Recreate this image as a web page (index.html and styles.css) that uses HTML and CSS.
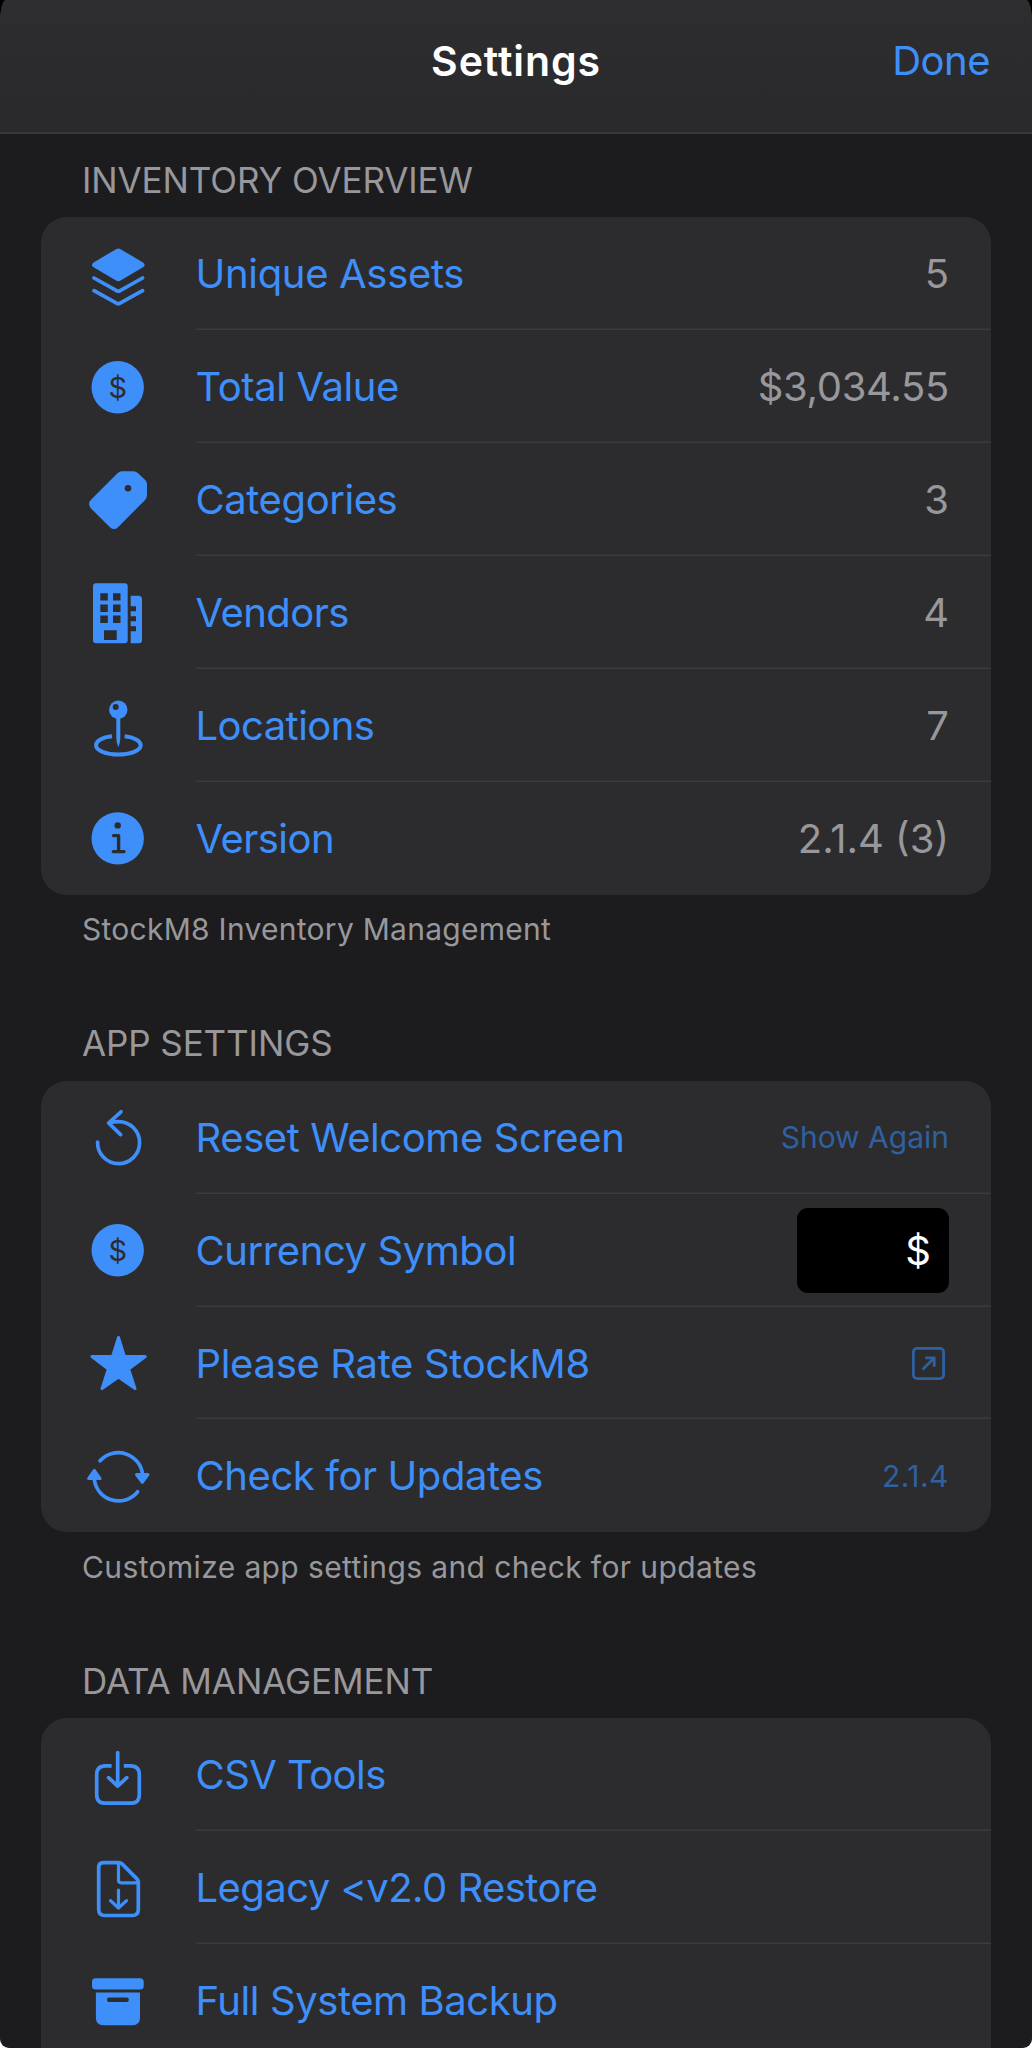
FILE: index.html
```html
<!DOCTYPE html>
<html lang="en">
<head>
    <meta charset="UTF-8">
    <meta name="viewport" content="width=device-width, initial-scale=1.0">
    <title>Settings</title>
    <link rel="stylesheet" href="styles.css">
</head>
<body>
    <div class="sheet">
        <header class="navbar">
            <h1>Settings</h1>
            <a class="done" href="#">Done</a>
        </header>

        <main>
            <section>
                <h2>Inventory Overview</h2>
                <div class="card">
                    <div class="row">
                        <svg class="icon" viewBox="0 0 64 72">
                            <path class="fill" d="M30 11.2Q32.3 9.8 34.6 11.2L57 24.5Q60.4 26.9 57 29.2L34.6 42.5Q32.3 43.9 30 42.5L7.6 29.2Q4.2 26.9 7.6 24.5Z"/>
                            <path class="line" d="M8 40L30.5 52.6Q32.3 53.7 34.1 52.6L56.6 40M8 52.6L30.5 65.2Q32.3 66.3 34.1 65.2L56.6 52.6"/>
                        </svg>
                        <div class="content"><span class="label loose">Unique Assets</span><span class="value">5</span></div>
                    </div>
                    <div class="row">
                        <svg class="icon" viewBox="0 0 64 72">
                            <circle class="fill" cx="31.7" cy="36.2" r="26.2"/>
                            <text class="symbol" x="31.7" y="46.7">$</text>
                        </svg>
                        <div class="content"><span class="label">Total Value</span><span class="value money">$3,034.55</span></div>
                    </div>
                    <div class="row">
                        <svg class="icon" viewBox="0 0 64 72">
                            <path class="fill" d="M31.5 9.3Q33.5 7.3 36 7.3H47.5Q50 7.3 51.8 9L59.2 16Q61 17.8 61 20V31Q61 34 58.8 36.2L32 63.2Q28 67 24 63.2L5 44.4Q1 40 5 35.8Z"/>
                            <circle class="hole" cx="42" cy="24.3" r="3.3"/>
                        </svg>
                        <div class="content"><span class="label">Categories</span><span class="value">3</span></div>
                    </div>
                    <div class="row">
                        <svg class="icon" viewBox="0 0 64 72">
                            <rect class="fill" x="7" y="6.3" width="34.7" height="60" rx="3"/>
                            <path class="fill" d="M44.7 18.7H52.5Q56 18.7 56 22.2V63.3Q56 66.3 53 66.3H44.7Z"/>
                            <path class="hole" d="M14.3 16.3h7.5v7.3h-7.5zM27 16.3h7.5v7.3H27zM14.3 27.6h7.5v7.3h-7.5zM27 27.6h7.5v7.3H27zM14.3 38.6h7.5v7.3h-7.5zM27 38.6h7.5v7.3H27zM18 53.3h12.7v9.7H18zM44 29.3h6v5h-6zM44 39.3h6v5h-6zM44 49.3h6v5h-6z"/>
                        </svg>
                        <div class="content"><span class="label tight">Vendors</span><span class="value">4</span></div>
                    </div>
                    <div class="row">
                        <svg class="icon" viewBox="0 0 64 72">
                            <path class="line ring" d="M26 46.3C16.5 47.3 10 50.8 10 55.3C10 60.5 20 64.5 32.3 64.5S54.7 60.5 54.7 55.3C54.7 50.8 48 47.3 38.7 46.3"/>
                            <circle class="fill" cx="32.3" cy="19.7" r="9.2"/>
                            <path class="fill" d="M30.3 27H34.3V48Q34 54 32.3 57.3Q30.6 54 30.3 48Z"/>
                            <circle class="hole" cx="29.7" cy="17" r="3"/>
                        </svg>
                        <div class="content"><span class="label tight">Locations</span><span class="value">7</span></div>
                    </div>
                    <div class="row">
                        <svg class="icon" viewBox="0 0 64 72">
                            <circle class="fill" cx="31.7" cy="36.4" r="26.2"/>
                            <circle class="hole" cx="31.7" cy="23.4" r="3.2"/>
                            <path class="cut" d="M27.5 33.6H32.6V49.6M27.3 49.6H38"/>
                        </svg>
                        <div class="content"><span class="label tight">Version</span><span class="value">2.1.4 (3)</span></div>
                    </div>
                </div>
                <p class="footnote">StockM8 Inventory Management</p>
            </section>

            <section>
                <h2>App Settings</h2>
                <div class="card">
                    <div class="row">
                        <svg class="icon" viewBox="0 0 64 72">
                            <path class="line" d="M11.6 41.2A21 21 0 1 0 32.6 20.6Q27.5 20.6 23 22M35 10.8L22.6 22L34.6 33.6"/>
                        </svg>
                        <div class="content"><span class="label">Reset Welcome Screen</span><span class="value action">Show Again</span></div>
                    </div>
                    <div class="row">
                        <svg class="icon" viewBox="0 0 64 72">
                            <circle class="fill" cx="31.7" cy="36.2" r="26.2"/>
                            <text class="symbol" x="31.7" y="46.7">$</text>
                        </svg>
                        <div class="content"><span class="label">Currency Symbol</span><span class="field">$</span></div>
                    </div>
                    <div class="row">
                        <svg class="icon" viewBox="0 0 64 72">
                            <path class="fill star" d="M32.5 10.5L38.4 29.5H59.3L42.6 42L49 61.6L32.5 50L16 61.6L22.4 42L5.9 29.5H26.6Z"/>
                        </svg>
                        <div class="content">
                            <span class="label loose">Please Rate StockM8</span>
                            <svg class="external" viewBox="0 0 33 33">
                                <rect x="1.4" y="1.4" width="30.2" height="30.2" rx="3.5"/>
                                <path d="M10.6 22.4L21.8 11.2M13.2 10.8H22.2V19.8"/>
                            </svg>
                        </div>
                    </div>
                    <div class="row">
                        <svg class="icon" viewBox="0 0 64 72">
                            <path class="line" d="M14.1 20.8A24.4 24.4 0 0 1 56.6 35M8.2 38A24.4 24.4 0 0 0 51.6 51.8"/>
                            <path class="fill tip" d="M50.5 34.6H62L56.3 42.3ZM2.6 38.6H14.1L8.3 30.4Z"/>
                        </svg>
                        <div class="content"><span class="label">Check for Updates</span><span class="value action number">2.1.4</span></div>
                    </div>
                </div>
                <p class="footnote wide">Customize app settings and check for updates</p>
            </section>

            <section>
                <h2>Data Management</h2>
                <div class="card open">
                    <div class="row">
                        <svg class="icon" viewBox="0 0 64 72">
                            <path class="line butt" d="M25.6 26.9H19.5Q10.7 26.9 10.7 35.7V55.4Q10.7 64.2 19.5 64.2H44.5Q53.3 64.2 53.3 55.4V35.7Q53.3 26.9 44.5 26.9H37.8"/>
                            <path class="line" d="M31.7 13.6V47M22.6 38.6L31.7 47.2L40.8 38.6"/>
                        </svg>
                        <div class="content"><span class="label tight">CSV Tools</span></div>
                    </div>
                    <div class="row">
                        <svg class="icon" viewBox="0 0 64 72">
                            <path class="line" d="M17.5 10.6H32.5Q34.8 10.6 36.3 12.1L50.7 26.6Q52.3 28.2 52.3 30.6V57.5Q52.3 63.5 46.3 63.5H18.7Q12.7 63.5 12.7 57.5V15.6Q12.7 10.6 17.5 10.6Z"/>
                            <path class="line thin" d="M32.5 11.5V28Q32.5 30.8 35.3 30.8H51M32.5 38V56M24.5 48.6L32.5 56L40.5 48.6"/>
                        </svg>
                        <div class="content"><span class="label tight">Legacy &lt;v2.0 Restore</span></div>
                    </div>
                    <div class="row">
                        <svg class="icon" viewBox="0 0 64 72">
                            <rect class="fill" x="6" y="13.3" width="51.7" height="11.3" rx="3.5"/>
                            <path class="fill" d="M9.9 27.6H54V52.8Q54 60.3 46.5 60.3H17.4Q9.9 60.3 9.9 52.8Z"/>
                            <rect class="hole" x="21" y="32.5" width="21.8" height="4.6" rx="2"/>
                        </svg>
                        <div class="content"><span class="label">Full System Backup</span></div>
                    </div>
                </div>
            </section>
        </main>
    </div>
</body>
</html>
```
FILE: styles.css
```css
:root {
    --blue: #3f8ffb;
    --blue-dim: #2f609f;
    --gray: #98989c;
    --sheet: #1c1c1e;
    --card: #2c2c2e;
    --separator: #3b3b3d;
}

* {
    margin: 0;
    padding: 0;
    box-sizing: border-box;
}

body {
    height: 2048px;
    overflow: hidden;
    background: linear-gradient(#000 50%, #fff 50%);
    font-family: Inter, sans-serif;
    font-size: 40px;
    color: var(--blue);
}

.sheet {
    height: 2048px;
    overflow: hidden;
    border-radius: 6px 6px 9px 9px / 22px 22px 9px 9px;
    background: var(--sheet);
}

.navbar {
    display: grid;
    grid-template-columns: 1fr auto 1fr;
    height: 134px;
    padding: 37px 42px 0;
    line-height: 48px;
    background: linear-gradient(#2e2e30, #29292b);
    border-bottom: 2px solid #38383a;
}

h1 {
    grid-column: 2;
    font-size: 41px;
    font-weight: 600;
    letter-spacing: 0.9px;
    color: #fff;
}

.done {
    justify-self: end;
    letter-spacing: -0.5px;
    color: var(--blue);
    text-decoration: none;
}

main {
    padding: 23.9px 41px 0;
}

h2 {
    padding: 0 41px 15.4px;
    font-size: 35px;
    font-weight: 400;
    line-height: 44px;
    letter-spacing: -0.1px;
    text-transform: uppercase;
    color: var(--gray);
}

section + section {
    margin-top: 72.2px;
}

.card {
    background: var(--card);
    border-radius: 26px;
}

/* runs on past the bottom of the screen */
.card.open {
    border-radius: 26px 26px 0 0;
}

.row {
    display: flex;
    align-items: center;
    height: 112.95px;
    padding-left: 45px;
}

.icon {
    width: 64px;
    height: 72px;
    flex: none;
    margin-right: 45.5px;
}

.content {
    display: flex;
    flex: 1;
    align-items: center;
    justify-content: space-between;
    height: 100%;
    padding-right: 42px;
    white-space: nowrap;
}

.row:not(:last-child) .content {
    box-shadow: inset 0 -1.5px var(--separator);
}

.label {
    letter-spacing: -0.42px;
}

.label.tight {
    letter-spacing: -0.55px;
}

.label.loose {
    letter-spacing: -0.32px;
}

.value {
    color: var(--gray);
}

.money {
    letter-spacing: -0.3px;
}

.action {
    font-size: 30px;
    color: var(--blue-dim);
}

.number {
    letter-spacing: 0.5px;
}

.field {
    width: 152px;
    height: 85px;
    padding-right: 18px;
    border-radius: 11px;
    background: #000;
    color: #fff;
    line-height: 85px;
    text-align: right;
}

.footnote {
    margin: 14.2px 41px 0;
    font-size: 30px;
    line-height: 40px;
    letter-spacing: 0.27px;
    color: var(--gray);
}

.footnote.wide {
    letter-spacing: 0.38px;
}

/* icon parts */
.fill {
    fill: var(--blue);
}

.hole {
    fill: var(--card);
}

.line {
    fill: none;
    stroke: var(--blue);
    stroke-width: 3.7;
    stroke-linecap: round;
    stroke-linejoin: round;
}

.ring {
    stroke-width: 4;
    stroke-linecap: butt;
}

.butt {
    stroke-linecap: butt;
}

.thin {
    stroke-width: 3.2;
}

.cut {
    fill: none;
    stroke: var(--card);
    stroke-width: 3.4;
    stroke-linecap: round;
    stroke-linejoin: round;
}

.star,
.tip {
    stroke: var(--blue);
    stroke-width: 3;
    stroke-linejoin: round;
}

.symbol {
    fill: var(--card);
    font-size: 29px;
    font-weight: 400;
    text-anchor: middle;
}

.external {
    width: 33px;
    height: 33px;
    margin-right: 4px;
    fill: none;
    stroke: var(--blue-dim);
    stroke-width: 2.8;
    stroke-linejoin: round;
}
```
